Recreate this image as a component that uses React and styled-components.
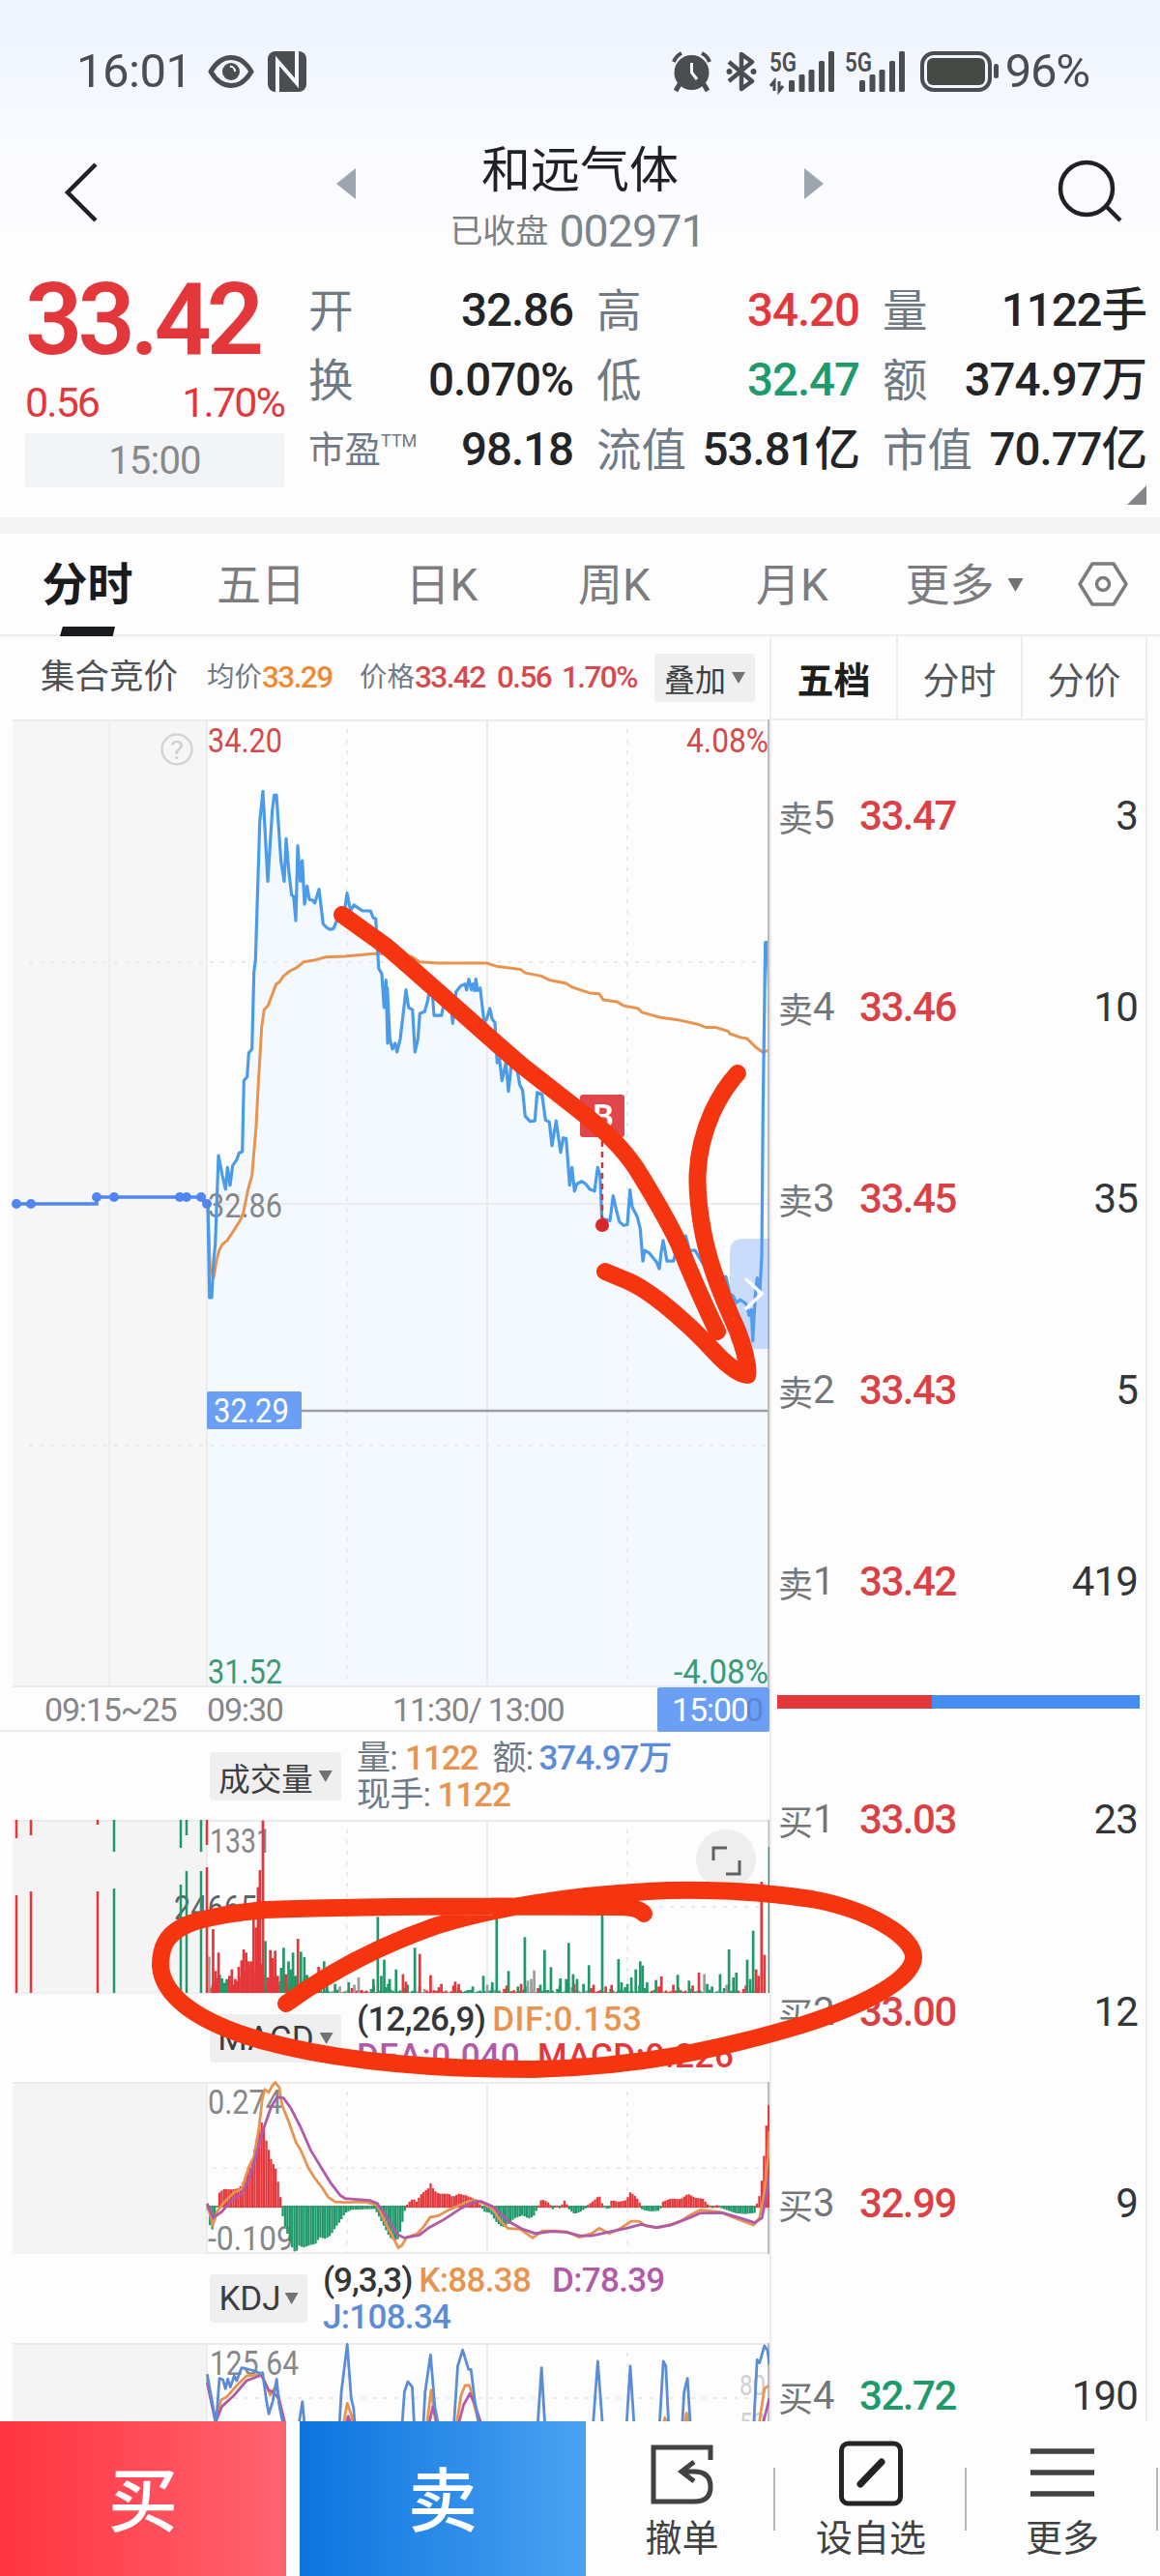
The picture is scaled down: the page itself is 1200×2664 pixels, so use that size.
import React from "react";
import styled, { createGlobalStyle, css } from "styled-components";

const FONT = `Roboto, "Noto Sans CJK SC", "Noto Sans", sans-serif`;
const RED = "#e2373b";
const GREEN = "#1f9a6b";
const INK = "#222426";
const SLATE = "#6f7a84";
const ORANGE = "#e8944f";
const PURPLE = "#b05aa8";
const BLUE = "#5b8cd8";
const LINE = "#ececee";
const UP = "#e5363a";
const DOWN = "#20996a";

const GlobalStyle = createGlobalStyle`
  body { margin: 0; background: #fdfdfe; font-family: ${FONT}; }
  * { box-sizing: border-box; }
`;

const Screen = styled.div`
  width: 1200px;
  height: 2664px;
  overflow: hidden;
  display: flex;
  flex-direction: column;
  background: linear-gradient(#edf5fe 0, #f1f6ff 60px, #fafbff 150px, #fdfdfe 260px);
  color: ${INK};
`;

const Text = styled.span`
  font-size: ${(p) => p.$size}px;
  font-weight: ${(p) => p.$weight || 400};
  color: ${(p) => p.$color || INK};
  letter-spacing: ${(p) => p.$track ?? 0}em;
  line-height: 1;
  white-space: nowrap;
`;

/* ---------- status bar ---------- */
const StatusBar = styled.div`
  height: 147px;
  flex: none;
  display: flex;
  align-items: center;
  justify-content: space-between;
  padding: 0 73px 0 79px;
`;
const StatusGroup = styled.div`
  display: flex;
  align-items: center;
`;
const Icon = styled.svg`
  display: block;
  flex: none;
  overflow: visible;
  margin-left: ${(p) => p.$gap || 0}px;
`;
const PercentText = styled(Text)`
  margin-left: 6px;
`;
const STATUS = "#4a4e50";

const Signal = ({ gap, data }) => (
  <Icon $gap={gap} width={data ? 67 : 62} height="42" viewBox={data ? "0 0 67 42" : "5 0 62 42"}>
    <text x={data ? 0 : 5} y="21" fontSize="27" fontWeight="600" fontFamily={FONT} fill={STATUS} textLength="28" lengthAdjust="spacingAndGlyphs">5G</text>
    {data && <path d="M5 41V31L1 36M10 31V41L14 36" stroke={STATUS} strokeWidth="3" fill="none" />}
    {[[22, 30], [32.5, 24], [42.5, 19], [53, 10], [63, 0]].map(([x, y]) => (
      <rect key={x} x={x - 2} y={y} width="6" height={42 - y} rx="1.5" fill={STATUS} />
    ))}
  </Icon>
);

const Status = () => (
  <StatusBar>
    <StatusGroup>
      <Text $size={49} $color={STATUS} $track={-0.01}>16:01</Text>
      <Icon $gap={16} width="48" height="34" viewBox="0 0 48 34">
        <path d="M3 17C10 5 17 2.5 24 2.5S38 5 45 17C38 29 31 31.5 24 31.5S10 29 3 17Z" fill="none" stroke={STATUS} strokeWidth="5" strokeLinejoin="round" />
        <circle cx="24" cy="17" r="9" fill={STATUS} />
        <path d="M23 11.500A5.500 5.500 0 0 1 28 17" fill="none" stroke="#fff" strokeWidth="2" />
      </Icon>
      <Icon $gap={14} width="40" height="42" viewBox="0 0 40 42">
        <rect width="40" height="42" rx="8" fill={STATUS} />
        <path d="M10 42V10L30 33V0" fill="none" stroke="#f3f7ff" strokeWidth="4" />
      </Icon>
    </StatusGroup>
    <StatusGroup>
      <Icon width="41" height="42" viewBox="0 0 41 42">
        <circle cx="20.500" cy="22" r="18" fill={STATUS} />
        <path d="M2 11Q4 5 10 2M39 11Q37 5 31 2" stroke={STATUS} strokeWidth="4" fill="none" />
        <path d="M8 34L4 41M33 34L37 41" stroke={STATUS} strokeWidth="5" />
        <path d="M20.500 12V22L26 29" stroke="#fff" strokeWidth="3" fill="none" />
      </Icon>
      <Icon $gap={15} width="32" height="42" viewBox="0 0 32 42">
        <path d="M3 11L27 31L16 39V3L27 11L3 31" stroke={STATUS} strokeWidth="4.500" fill="none" strokeLinejoin="round" />
        <circle cx="3.500" cy="21" r="3" fill={STATUS} />
        <circle cx="28.500" cy="21" r="3" fill={STATUS} />
      </Icon>
      <Signal gap={13} data />
      <Signal gap={11} />
      <Icon $gap={16} width="82" height="42" viewBox="0 0 82 42">
        <rect x="2" y="2" width="70" height="38" rx="12" fill="none" stroke={STATUS} strokeWidth="4" />
        <rect x="7" y="7" width="60" height="28" rx="6" fill="#454a46" />
        <rect x="76" y="13" width="5" height="15" rx="2.500" fill={STATUS} />
      </Icon>
      <PercentText $size={49} $color={STATUS} $track={-0.025}>96%</PercentText>
    </StatusGroup>
  </StatusBar>
);

/* ---------- title ---------- */
const TitleBar = styled.div`
  height: 123px;
  flex: none;
  display: grid;
  grid-template-columns: 348px 20px 1fr 20px 239px 109px;
  align-items: start;
`;
const TitleBlock = styled.div`
  display: flex;
  flex-direction: column;
  align-items: center;
`;
const TitleName = styled.div`
  font-size: 51px;
  line-height: 60px;
  color: #1f2124;
`;
const TitleSub = styled.div`
  display: flex;
  align-items: center;
  gap: 11px;
  height: 64px;
  padding-right: 5px;
`;
const Spot = styled.div`
  padding-top: ${(p) => p.$top}px;
  padding-left: ${(p) => p.$left || 0}px;
`;

const Title = () => (
  <TitleBar>
    <Spot $top={21} $left={66}>
      <Icon width="36" height="62" viewBox="0 0 36 62"><path d="M33 2L4 31L33 60" fill="none" stroke="#1f2124" strokeWidth="4.500" /></Icon>
    </Spot>
    <Spot $top={27}><Icon width="20" height="32" viewBox="0 0 20 32"><path d="M20 0V32L0 16Z" fill="#9ba6b1" /></Icon></Spot>
    <TitleBlock>
      <TitleName>和远气体</TitleName>
      <TitleSub>
        <Text $size={34} $color="#7b8084">已收盘</Text>
        <Text $size={46.5} $color="#7a868b" $track={-0.02}>002971</Text>
      </TitleSub>
    </TitleBlock>
    <Spot $top={27}><Icon width="20" height="32" viewBox="0 0 20 32"><path d="M0 0V32L20 16Z" fill="#9ba6b1" /></Icon></Spot>
    <span />
    <Spot $top={18} $left={3}>
      <Icon width="68" height="66" viewBox="0 0 68 66">
        <circle cx="30" cy="30" r="27" fill="none" stroke="#1f2124" strokeWidth="4.500" />
        <path d="M50 48L65 63" stroke="#1f2124" strokeWidth="4.500" />
      </Icon>
    </Spot>
  </TitleBar>
);

/* ---------- quote ---------- */
const Quote = styled.div`
  height: 265px;
  flex: none;
  display: grid;
  grid-template-columns: 268px 1fr;
  column-gap: 25px;
  padding: 10px 13px 0 26px;
`;
const QuotePrice = styled.div`
  font-size: 104px;
  font-weight: 600;
  line-height: 102px;
  height: 100px;
  letter-spacing: -0.048em;
  color: ${RED};
`;
const QuoteChange = styled.div`
  display: flex;
  justify-content: space-between;
  align-items: center;
  height: 68px;
  padding-top: 4px;
`;
const QuoteTime = styled.div`
  height: 56px;
  display: flex;
  align-items: center;
  justify-content: center;
  background: #f3f4f6;
  border-radius: 2px;
  padding-top: 2px;
`;
const Stats = styled.div`
  display: grid;
  grid-template-columns: 274px 272px 273px;
  grid-template-rows: repeat(3, 72px);
  column-gap: 24px;
  padding-top: 6px;
`;
const Stat = styled.div`
  display: flex;
  align-items: center;
  justify-content: space-between;
`;
const StatLabel = styled(Text)`
  display: flex;
`;
const Sup = styled.sup`
  font-size: 18px;
  line-height: 1;
  align-self: flex-start;
`;
const Corner = styled.div`
  grid-column: 3;
  justify-self: end;
  width: 20px;
  height: 20px;
  background: #85868a;
  clip-path: polygon(100% 0, 100% 100%, 0 100%);
`;
const STATS = [
  ["开", "32.86"], ["高", "34.20", RED], ["量", "1122手"],
  ["换", "0.070%"], ["低", "32.47", GREEN], ["额", "374.97万"],
  ["市盈", "98.18", INK, true], ["流值", "53.81亿"], ["市值", "70.77亿"],
];

const Band = styled.div`
  height: 17px;
  flex: none;
  background: #f4f4f5;
`;

/* ---------- period tabs ---------- */
const Tabs = styled.div`
  height: 106px;
  flex: none;
  display: grid;
  grid-template-columns: 181px 178px 196px 161px 207px 149px 128px;
  border-bottom: 2px solid ${LINE};
`;
const Tab = styled.div`
  display: flex;
  flex-direction: column;
  align-items: center;
  justify-content: space-between;
  height: 106px;
  padding-top: 29px;
  font-size: 46px;
  line-height: 48px;
  white-space: nowrap;
  color: #7c7c7e;
  ${(p) => p.$active && css`
    color: #1a1b1d;
    font-weight: 700;
    font-size: 47px;
    &::after {
      content: "";
      width: 57px;
      height: 10px;
      background: #1a1b1d;
      clip-path: polygon(5% 0, 100% 0, 96% 100%, 0 100%);
    }
  `}
`;
const Inline = styled.div`
  display: flex;
  align-items: center;
`;
const Caret = styled.i`
  flex: none;
  width: ${(p) => p.$w || 14}px;
  height: ${(p) => p.$h || 12}px;
  margin-left: ${(p) => p.$gap ?? 6}px;
  background: ${(p) => p.$color || "#707274"};
  clip-path: polygon(0 0, 100% 0, 50% 100%);
`;

/* ---------- body ---------- */
const Body = styled.div`
  position: relative;
  flex: 1;
  display: grid;
  grid-template-columns: 796px 391px;
  overflow: hidden;
`;
const ChartColumn = styled.div`
  display: flex;
  flex-direction: column;
`;
const InfoBar = styled.div`
  height: 86px;
  flex: none;
  display: grid;
  align-items: center;
  grid-template-columns: 172px 158px 142px 67px 96px 104px;
  padding-left: 42px;
`;
const Drop = styled.div`
  height: 50px;
  width: ${(p) => p.$w}px;
  flex: none;
  display: flex;
  align-items: center;
  justify-content: center;
  background: #efeff0;
  border-radius: 4px;
  font-size: ${(p) => p.$size || 32}px;
  color: #3c3e40;
  white-space: nowrap;
`;
const Axis = styled.div`
  height: 46px;
  flex: none;
  display: grid;
  grid-template-columns: 168px 192px 274px 116px;
  align-items: center;
  padding-left: 46px;
  border-bottom: 2px solid ${LINE};
  font-size: 34px;
  letter-spacing: -0.035em;
  color: #858688;
  white-space: nowrap;
`;
const AxisNow = styled.div`
  position: relative;
  height: 46px;
  line-height: 46px;
  padding-left: 15px;
  background: #6b9ff6;
  color: #fff;
  border-radius: 2px;
`;
const AxisGhost = styled.span`
  position: absolute;
  right: 7px;
  color: #5c86cf;
`;
const Indicator = styled.div`
  height: ${(p) => p.$h}px;
  flex: none;
  display: flex;
  padding-left: 217px;
`;
const IndicatorButton = styled(Drop)`
  margin-top: 21px;
`;
const Readout = styled.div`
  padding: ${(p) => p.$top || 8}px 0 0 16px;
  font-size: 35px;
  font-weight: 500;
`;
const ReadoutLine = styled.div`
  display: flex;
  height: 38px;
  line-height: 38px;
  white-space: nowrap;
`;
const Value = styled.span`
  color: ${(p) => p.$c};
  font-weight: ${(p) => p.$w || 500};
  margin-left: ${(p) => p.$gap || 0}px;
  letter-spacing: ${(p) => p.$track ?? -0.02}em;
`;
const Plot = styled.svg`
  display: block;
  flex: none;
  overflow: visible;
`;

/* Maps plotted samples to panel pixels. */
const trace = (points, sx, sy, ox = 0, oy = 0) =>
  points.map(([x, y], i) => `${i ? "L" : "M"}${(ox + x / sx).toFixed(1)} ${(oy + y / sy).toFixed(1)}`).join("");
const pairs = (s) => s.trim().split(/\s+/).map((p) => p.split(",").map(Number));

const PRICE_AM = pairs(`645,1235 650,1475 657,1475 663,1380 668,1340 678,1115 690,1165 700,1200 706,1145 714,1190 722,1140 735,1125 742,1108 752,1105 757,925 767,915 772,855 782,845 788,650 793,620 806,270 816,192 831,420 845,240 851,202 858,202 872,370 882,420 888,312 897,400 905,455 911,458 918,520 924,330 932,420 938,368 945,478 953,432 960,466 970,468 977,475 990,440 1003,528 1015,538 1025,542 1035,540 1045,520 1060,500 1070,490 1077,450 1088,495 1098,480 1125,495 1150,495 1158,512 1166,515 1175,640 1185,655 1192,740 1198,670 1203,830`);
const PRICE_PM = pairs(`2,690 10,820 18,845 26,830 32,852 42,820 60,695 68,740 80,745 88,852 97,820 103,755 118,750 128,720 138,660 147,760 170,760 180,720 200,740 205,780 215,700 230,685 243,680 248,695 255,668 263,695 268,680 273,697 277,668 282,697 290,690 303,780 312,765 320,742 328,770 336,778 343,880 350,870 358,925 370,880 378,952 390,860 405,900 413,935 422,950 430,1015 445,1028 460,1027 467,955 482,960 493,1025 505,1030 513,1090 526,1027 540,1107 548,1070 557,1072 568,1190 575,1145 583,1205 590,1187 605,1180 618,1187 630,1200 645,1205 655,1145 662,1165 668,1275 693,1280 703,1217 712,1250 722,1282 735,1292 747,1290 755,1202 762,1245 778,1270 787,1300 795,1382 801,1355 815,1362 825,1372 838,1385 846,1402 852,1360 858,1330 870,1382 890,1382 900,1350 928,1318 940,1355 957,1355 990,1400 1020,1372 1030,1400 1040,1422 1053,1422 1065,1465 1075,1470 1085,1488 1097,1480 1115,1490 1125,1520 1132,1505 1136,1585 1144,1470 1150,1425 1158,1460 1164,1370 1168,1000 1175,575 1182,575 1188,730`);
const AVG_AM = pairs(`645,1235 652,1400 663,1425 672,1380 680,1355 690,1340 705,1330 725,1305 745,1280 755,1260 770,1200 782,1165 795,1040 802,930 812,790 820,745 832,735 857,680 866,676 880,660 898,648 918,640 943,624 975,620 1010,612 1070,610 1170,603`);
const AVG_PM = pairs(`0,604 60,610 80,612 102,624 160,627 310,627 340,635 415,643 430,652 480,660 505,670 555,678 575,688 630,703 660,705 672,720 715,725 735,735 780,742 792,752 850,765 910,772 965,782 990,790 1020,790 1060,800 1065,806 1100,816 1118,818 1145,840 1168,853 1190,847`);
const join = (am, pm) => trace(am, 3, 2.45, 0, -4) + trace(pm, 3, 2.45, 400, -4).replace("M", "L");

const PlotText = ({ x, y, w, color, end, size = 35, children }) => (
  <text x={x} y={y} fontFamily={FONT} fontSize={size} fill={color} textLength={w} lengthAdjust="spacingAndGlyphs" textAnchor={end ? "end" : "start"}>{children}</text>
);

const Grid = ({ h, left, mid }) => (
  <g stroke="#e9ebed" strokeWidth="2" fill="none">
    <path d={`M13 1H797M214 0V${h}M504 0V${h}`} />
    <path d={`M359 10V${h}M649 10V${h}`} strokeDasharray="4 7" />
    {mid && <path d={`M220 ${mid}H790`} strokeDasharray="4 7" />}
    {left && <path d={`M113 0V${h}`} strokeWidth="1.500" />}
  </g>
);

const AUCTION = [[17, 501], [32, 501], [100, 494], [118, 494], [186, 494], [193, 494], [208, 494], [214, 501]];

const PricePlot = () => {
  const line = join(PRICE_AM, PRICE_PM);
  return (
    <Plot width="796" height="1001" viewBox="0 0 796 1001">
      <rect x="13" width="201" height="1001" fill="#f6f6f6" />
      <path d={`${line}L796 1001L215 1001Z`} fill="#f4f9ff" />
      <Grid h={1001} left />
      <g stroke="#e9ebed" strokeWidth="2">
        <path d="M30 251H795M30 751H795" strokeDasharray="4 7" />
        <path d="M214 501H797M13 1000H797" />
      </g>
      <circle cx="183" cy="31" r="15.500" fill="none" stroke="#d4d4d6" strokeWidth="2.500" />
      <PlotText x={176} y={41} size={26} w={14} color="#cfcfd1">?</PlotText>
      <PlotText x={215} y={34} w={77} color="#d5484b">34.20</PlotText>
      <PlotText x={795} y={34} w={85} color="#d5484b" end>4.08%</PlotText>
      <PlotText x={215} y={515} w={77} color="#858789">32.86</PlotText>
      <PlotText x={215} y={997} w={77} color="#389b74">31.52</PlotText>
      <PlotText x={795} y={997} w={98} color="#389b74" end>-4.08%</PlotText>
      <path d="M312 715H797" stroke="#9a9ea4" strokeWidth="2.500" />
      <rect x="214" y="695" width="98" height="39" rx="2" fill="#6b9ff6" />
      <PlotText x={221} y={727} w={78} color="#fff">32.29</PlotText>
      <path d={join(AVG_AM, AVG_PM)} fill="none" stroke={ORANGE} strokeWidth="3" strokeLinejoin="round" />
      <path d={line} fill="none" stroke="#4a9bea" strokeWidth="3.200" strokeLinejoin="round" />
      <path d="M13 501H100V494H208L214 501" fill="none" stroke="#4f86f0" strokeWidth="3.500" />
      {AUCTION.map(([x, y]) => <circle key={x} cx={x} cy={y} r="5" fill="#4f86f0" />)}
      <path d="M623 436V518" stroke="#c23b3f" strokeWidth="2.500" strokeDasharray="6 5" />
      <circle cx="623" cy="523" r="7" fill="#d8262b" />
      <rect x="600" y="388" width="46" height="44" rx="3" fill="#e0464b" />
      <text x="624" y="422" textAnchor="middle" fontFamily={FONT} fontWeight="600" fontSize="34" fill="#fff">B</text>
      <path d="M795.500 0V1001" stroke="#b9bcbf" strokeWidth="3" />
      <path d="M797 537H769Q755 537 755 551V637Q755 651 769 651H797Z" fill="#6b9ff6" opacity=".35" />
      <path d="M771 578L788 594L771 610" fill="none" stroke="#fff" strokeWidth="3.500" />
    </Plot>
  );
};

const VOL = `424,730,n 432,645,r 437,775,r 443,718,r 450,798,g 455,812,g 460,800,g 465,790,r 470,770,r 477,800,r 484,762,r 490,790,r 494,708,r 499,718,r 504,745,r 510,745,r 514,610,r 519,640,r 523,515,r 527,462,r 533,308,r 538,682,g 543,795,r 548,710,r 553,735,r 558,712,r 563,790,r 570,765,g 575,703,g 580,785,r 585,745,g 590,770,g 594,718,g 599,790,g 604,675,r 610,715,g 617,732,g 623,790,g 630,800,g 646,762,r 657,745,g 663,800,g 707,810,g 727,795,n 757,800,g 766,607,g 773,790,g 779,740,g 790,800,g 803,770,g 817,785,r 823,808,r 841,703,g 851,722,r 873,788,r 923,808,r 930,815,r 980,790,g 998,810,g 1007,600,g 1031,775,g 1050,823,g 1064,670,g 1070,805,n 1077,800,n 1083,773,n 1104,710,g 1117,763,g 1136,798,g 1148,800,g 1153,688,g 1162,785,g 1170,800,g 1183,815,g 1194,757,g 1221,595,g 1240,818,r 1254,738,g 1260,810,g 1280,795,g 1289,770,g 1298,745,g 1303,758,g 1312,810,g 1330,803,g 1341,792,r 1374,787,g 1397,805,g 1417,780,r 1428,785,n 1460,785,g 1478,708,g 1487,795,g 1493,780,g 1515,740,g 1521,800,g 1527,650,g 1533,770,r 1538,790,r 1544,498,r 1550,725,r 1560,390,g`
  .split(" ").map((s) => s.split(","));
const TINT = { r: UP, g: DOWN, n: "#98a09c" };
/* Quiet minutes between the traded spikes. */
const QUIET = Array.from({ length: 184 }, (_, i) => [
  640 + i * 4.9,
  845 - (4 + ((i * 37) % 11) * ((i * 13) % 7 > 3 ? 2.6 : 0.7)),
  "grgrngrg"[(i * 5 + (i >> 2)) % 8],
]);
const OPENING = Array.from({ length: 44 }, (_, i) => [
  426 + i * 4.9,
  845 - (18 + ((i * 29) % 9) * 5 + (i > 12 && i < 22 ? 45 : 0)),
  i < 4 || (i > 7 && i < 29 && i !== 23) ? "r" : "g",
]);
const AUCTION_VOL = [[17, 19, 78, "r"], [32, 16, 74, "r"], [101, 5, 74, "r"], [118, 33, 71, "g"], [187, 29, 67, "g"], [193, 16, 53, "g"], [208, 33, 53, "g"], [214, 26, 49, "r"]];

const VolumePlot = () => (
  <Plot width="796" height="180" viewBox="0 0 796 180">
    <rect x="13" width="201" height="180" fill="#f4f4f4" />
    <Grid h={180} mid={90} />
    <PlotText x={217} y={34} w={64} color="#858789">1331</PlotText>
    <PlotText x={180} y={103} w={86} color="#606264">24665</PlotText>
    {AUCTION_VOL.map(([x, a, b, c]) => (
      <path key={x} d={`M${x} 0V${a}M${x} ${b}V180`} stroke={TINT[c]} strokeWidth="2.500" />
    ))}
    {[...OPENING, ...QUIET, ...VOL].map(([x, y, c], i) => (
      <rect key={i} x={x / 1.96 - 1.3} y={(y - 306) / 3} width="2.700" height={(845 - y) / 3} fill={TINT[c]} />
    ))}
    <path d="M13 179.500H797" stroke={LINE} />
    <path d="M796 0V28" stroke="#b9bcbf" strokeWidth="3" />
    <circle cx="751" cy="41" r="31" fill="#ececed" opacity=".9" />
    <path d="M738 42V29H752M765 42V56H751" fill="none" stroke="#5e6062" strokeWidth="3" />
  </Plot>
);

const HIST = pairs(`420,485 425,540 432,560 438,500 441,480 445,440 455,430 470,432 485,428 495,405 510,350 520,280 527,240 533,212 540,280 550,340 560,370 566,430 571,480 574,525 583,570 590,605 600,632 605,605 615,612 628,605 640,600 648,580 660,585 670,575 680,550 690,530 700,505 712,495 760,492 770,520 780,550 790,580 800,590 808,585 815,540 822,490 825,480 830,470 838,460 845,470 852,450 862,435 868,430 873,412 880,435 890,445 910,445 918,455 930,445 945,450 960,460 975,480 980,500 995,505 1005,530 1015,545 1025,550 1032,535 1045,520 1060,512 1072,522 1082,515 1090,490 1093,478 1098,462 1110,470 1116,480 1120,495 1127,478 1135,490 1145,465 1150,480 1153,492 1165,508 1175,502 1188,490 1192,480 1205,465 1215,450 1222,480 1228,492 1236,490 1240,465 1255,470 1270,465 1278,440 1290,455 1298,475 1302,495 1320,500 1335,498 1340,490 1343,470 1360,460 1380,462 1395,445 1410,458 1425,460 1435,478 1445,490 1452,478 1460,488 1490,505 1510,508 1530,505 1534,480 1542,440 1548,350 1553,250 1557,175 1562,160`);
const levelAt = (x) => {
  const i = Math.max(1, HIST.findIndex((p) => p[0] >= x));
  const [a, b] = [HIST[i - 1], HIST[i]];
  return a[1] + ((b[1] - a[1]) * (x - a[0])) / (b[0] - a[0]);
};
const MACD_BARS = Array.from({ length: 240 }, (_, i) => 421 + i * 4.76);
const DIF = pairs(`420,480 432,540 440,500 455,470 475,440 490,430 505,360 515,330 525,240 532,150 537,122 545,130 552,110 558,100 566,115 572,170 585,220 600,285 610,310 625,365 640,400 655,430 665,455 680,470 700,472 740,470 765,480 780,530 800,590 808,612 815,605 825,580 845,570 860,545 872,518 890,512 910,495 935,478 950,468 965,465 980,475 1000,495 1015,530 1030,552 1055,555 1080,582 1100,560 1130,560 1150,563 1175,580 1200,568 1215,552 1235,568 1255,555 1280,530 1295,530 1310,545 1335,550 1360,540 1380,530 1400,510 1420,495 1460,502 1490,520 1528,542 1540,520 1550,440 1557,330 1560,250`);
const DEA = pairs(`420,475 432,520 450,500 470,465 490,445 505,400 520,320 535,240 550,175 562,145 575,148 590,180 610,240 630,310 650,360 670,410 690,450 700,460 750,466 765,475 785,520 805,570 820,582 850,573 870,550 900,525 935,490 960,470 975,468 1000,485 1030,530 1060,555 1085,568 1120,562 1150,565 1175,575 1200,575 1240,562 1270,552 1300,540 1330,550 1360,542 1400,518 1420,505 1465,504 1500,520 1530,535 1545,520 1555,440 1562,380`);

const MacdPlot = () => (
  <Plot width="796" height="178" viewBox="0 0 796 178">
    <rect x="13" width="201" height="178" fill="#f4f4f4" />
    <Grid h={178} mid={89} />
    <path d="M214 177H797" stroke={LINE} strokeWidth="2" />
    <path d="M795.500 0V178" stroke="#b9bcbf" strokeWidth="3" />
    <PlotText x={215} y={33} w={77} color="#858789">0.274</PlotText>
    <PlotText x={215} y={174} w={89} color="#858789">-0.109</PlotText>
    <path d="M214 129.500H797" stroke="#f0a5a5" strokeWidth="1.500" />
    {MACD_BARS.map((x) => {
      const y = (levelAt(x) - 98) / 3;
      const zero = 129;
      return <rect key={x} x={x / 1.96 - 1.15} y={Math.min(y, zero - 1)} width="2.300" height={Math.abs(zero - y) + 1} fill={y < zero ? UP : DOWN} />;
    })}
    <path d={trace(DIF, 1.96, 3, 0, -32.6)} fill="none" stroke={ORANGE} strokeWidth="2.800" />
    <path d={trace(DEA, 1.96, 3, 0, -32.6)} fill="none" stroke={PURPLE} strokeWidth="2.800" />
  </Plot>
);

const J = pairs(`420,1005 430,1090 438,1160 445,1018 452,1022 457,1050 462,1020 467,1045 475,1010 480,1025 490,985 510,992 533,1005 540,1085 545,1128 553,1090 561,1020 566,1100 575,1170 605,1170 613,1090 618,1170 688,1170 692,1060 704,912 712,1080 717,1110 720,1170 815,1170 820,1060 827,1028 836,1045 840,1170 858,1170 862,1060 873,945 882,1110 890,1170 920,1170 928,980 938,930 950,990 955,990 963,1090 972,1170 1090,1170 1098,985 1105,1170 1202,1170 1212,965 1222,1170 1270,1170 1278,980 1286,1170 1337,1170 1345,965 1350,980 1356,1170 1383,1170 1387,1060 1394,1018 1400,1170 1528,1170 1535,960 1540,970 1550,917 1556,930 1560,975`);
const K = pairs(`420,1020 437,1150 448,1085 460,1075 480,1040 500,1010 530,1005 540,1040 548,1070 560,1040 570,1110 578,1170 695,1170 704,1095 712,1130 718,1170 865,1170 874,1055 885,1170 925,1170 935,1070 943,1040 952,1040 965,1120 973,1170 1343,1170 1348,1140 1354,1170 1387,1170 1392,1125 1397,1170 1538,1170 1550,1050 1558,1040`);
const D = pairs(`420,1030 437,1155 450,1105 475,1070 500,1025 530,1008 545,1055 553,1060 565,1080 580,1170 700,1170 706,1135 714,1170 868,1170 878,1105 888,1170 928,1170 940,1100 953,1065 963,1100 978,1170 1545,1170 1560,1080`);

const KdjPlot = () => (
  <Plot width="796" height="81" viewBox="0 0 796 81">
    <rect x="13" width="201" height="81" fill="#f4f4f4" />
    <Grid h={81} mid={57} />
    <path d="M795.500 0V81" stroke="#b9bcbf" strokeWidth="3" />
    <PlotText x={217} y={33} w={92} color="#858789">125.64</PlotText>
    <PlotText x={765} y={54} w={27} size={30} color="#cfd0d2">80</PlotText>
    <PlotText x={765} y={93} w={27} size={30} color="#cfd0d2">50</PlotText>
    <g transform="translate(0 -302.700)" fill="none" strokeWidth="2.800" strokeLinejoin="round">
      <path d={trace(K, 1.96, 3)} stroke={ORANGE} />
      <path d={trace(D, 1.96, 3)} stroke={PURPLE} />
      <path d={trace(J, 1.96, 3)} stroke={BLUE} />
    </g>
  </Plot>
);

/* ---------- order book ---------- */
const Book = styled.div`
  display: flex;
  flex-direction: column;
  border-left: 2px solid ${LINE};
  border-right: 2px solid ${LINE};
`;
const BookTabs = styled.div`
  height: 87px;
  flex: none;
  display: grid;
  grid-template-columns: repeat(3, 1fr);
  border-bottom: 2px solid ${LINE};
`;
const BookTab = styled.div`
  display: flex;
  align-items: center;
  justify-content: center;
  font-size: 38px;
  font-weight: ${(p) => (p.$active ? 700 : 400)};
  color: ${(p) => (p.$active ? "#1d1e20" : "#55585a")};
  & + & { border-left: 2px solid ${LINE}; }
`;
const Order = styled.div`
  height: ${(p) => p.$h}px;
  flex: none;
  display: grid;
  grid-template-columns: 84px 1fr auto;
  align-items: center;
  padding: 0 8px 0 7px;
  white-space: nowrap;
`;
const OrderLabel = styled.div`
  display: flex;
  align-items: center;
  font-size: 36px;
  color: #747678;
`;
const Ratio = styled.div`
  height: 14px;
  flex: none;
  display: flex;
  margin: 18px 6px 16px 6px;
`;
const RatioPart = styled.div`
  flex: ${(p) => p.$n};
  background: ${(p) => p.$c};
`;
const ASKS = [["5", "33.47", "3"], ["4", "33.46", "10"], ["3", "33.45", "35"], ["2", "33.43", "5"], ["1", "33.42", "419"]];
const BIDS = [["1", "33.03", "23"], ["2", "33.00", "12"], ["3", "32.99", "9"], ["4", "32.72", "190", GREEN]];

const OrderRow = ({ side, h, row: [n, price, qty, color] }) => (
  <Order $h={h}>
    <OrderLabel>{side}<Text $size={40} $color="#747678" $track={-0.03}>{n}</Text></OrderLabel>
    <Text $size={42} $weight={500} $color={color || "#dc4044"} $track={-0.035}>{price}</Text>
    <Text $size={42} $color="#333537" $track={-0.02}>{qty}</Text>
  </Order>
);

/* ---------- markup drawn over the charts ---------- */
const Markup = styled.svg`
  position: absolute;
  left: 0;
  top: 0;
  pointer-events: none;
`;

/* ---------- action bar ---------- */
const Actions = styled.div`
  height: 160px;
  flex: none;
  display: grid;
  grid-template-columns: 296px 296px 1fr;
  column-gap: 14px;
  background: #fdfdfe;
`;
const Trade = styled.div`
  display: flex;
  align-items: center;
  justify-content: center;
  padding-bottom: 8px;
  color: #fff;
  font-size: 72px;
  font-weight: 500;
  background: linear-gradient(90deg, ${(p) => p.$from}, ${(p) => p.$to});
`;
const Tools = styled.div`
  display: grid;
  grid-template-columns: 182px 198px 198px;
`;
const Tool = styled.div`
  position: relative;
  display: flex;
  flex-direction: column;
  align-items: center;
  gap: 8px;
  padding: 20px ${(p) => p.$pull || 0}px 0 0;
  font-size: 38px;
  line-height: 50px;
  color: #3f4143;
  white-space: nowrap;
  &::after {
    content: "";
    position: absolute;
    right: 0;
    top: 48px;
    width: 2px;
    height: 65px;
    background: #b5b7b9;
  }
`;

export default function App() {
  return (
    <Screen>
      <GlobalStyle />
      <Status />
      <Title />
      <Quote>
        <div>
          <QuotePrice>33.42</QuotePrice>
          <QuoteChange>
            <Text $size={43} $color={RED} $track={-0.045}>0.56</Text>
            <Text $size={43} $color={RED} $track={-0.045}>1.70%</Text>
          </QuoteChange>
          <QuoteTime><Text $size={40} $color="#88898c" $track={-0.02}>15:00</Text></QuoteTime>
        </div>
        <Stats>
          {STATS.map(([label, value, color, ttm]) => (
            <Stat key={label}>
              <StatLabel $size={ttm ? 37.5 : 46.5} $color={SLATE}>{label}{ttm && <Sup>TTM</Sup>}</StatLabel>
              <Text $size={47.5} $weight={500} $color={color} $track={-0.022}>{value}</Text>
            </Stat>
          ))}
          <Corner />
        </Stats>
      </Quote>
      <Band />
      <Tabs>
        <Tab $active>分时</Tab>
        <Tab>五日</Tab>
        <Tab>日K</Tab>
        <Tab>周K</Tab>
        <Tab>月K</Tab>
        <Tab><Inline>更多<Caret $w={16} $h={14} $gap={14} /></Inline></Tab>
        <Tab>
          <Inline>
            <Icon $gap={10} width="52" height="46" viewBox="0 0 52 46">
              <path d="M15 2H37L50 23L37 44H15L2 23Z" fill="none" stroke="#7c7c7e" strokeWidth="3.500" strokeLinejoin="round" />
              <circle cx="26" cy="23" r="6.500" fill="none" stroke="#7c7c7e" strokeWidth="3.500" />
            </Icon>
          </Inline>
        </Tab>
      </Tabs>
      <Body>
        <ChartColumn>
          <InfoBar>
            <Text $size={35.5} $color="#4f5153">集合竞价</Text>
            <Inline><Text $size={28.5} $color={SLATE}>均价</Text><Text $size={31.5} $weight={500} $color="#f08a32" $track={-0.05}>33.29</Text></Inline>
            <Inline><Text $size={28.5} $color={SLATE}>价格</Text><Text $size={31.5} $weight={500} $color="#d9484b" $track={-0.05}>33.42</Text></Inline>
            <Text $size={31.5} $weight={500} $color="#d9484b" $track={-0.05}>0.56</Text>
            <Text $size={31.5} $weight={500} $color="#d9484b" $track={-0.05}>1.70%</Text>
            <Drop $w={104}>叠加<Caret /></Drop>
          </InfoBar>
          <PricePlot />
          <Axis>
            <span>09:15~25</span>
            <span>09:30</span>
            <span>11:30/ 13:00</span>
            <AxisNow><AxisGhost>0</AxisGhost>15:00</AxisNow>
          </Axis>
          <Indicator $h={91}>
            <IndicatorButton $w={136} $size={32.5}>成交量<Caret /></IndicatorButton>
            <Readout $top={9}>
              <ReadoutLine>
                <Value $c={SLATE} $w={400}>量:</Value><Value $c={ORANGE} $gap={8} $track={-0.03}>1122</Value>
                <Value $c={SLATE} $w={400} $gap={15}>额:</Value><Value $c={BLUE} $gap={6} $track={-0.03}>374.97万</Value>
              </ReadoutLine>
              <ReadoutLine><Value $c={SLATE} $w={400}>现手:</Value><Value $c={ORANGE} $gap={7} $track={-0.03}>1122</Value></ReadoutLine>
            </Readout>
          </Indicator>
          <VolumePlot />
          <Indicator $h={91}>
            <IndicatorButton $w={136} $size={35}>MACD<Caret /></IndicatorButton>
            <Readout>
              <ReadoutLine><Value $c="#333537">(12,26,9)</Value><Value $c={ORANGE} $gap={7} $track={0.015}>DIF:0.153</Value></ReadoutLine>
              <ReadoutLine><Value $c={PURPLE} $track={0.015}>DEA:0.040</Value><Value $c={UP} $gap={18} $track={0.015}>MACD:0.226</Value></ReadoutLine>
            </Readout>
          </Indicator>
          <MacdPlot />
          <Indicator $h={92}>
            <IndicatorButton $w={101} $size={35}>KDJ<Caret $gap={4} /></IndicatorButton>
            <Readout $top={9}>
              <ReadoutLine><Value $c="#333537" $track={-0.03}>(9,3,3)</Value><Value $c={ORANGE} $gap={7}>K:88.38</Value><Value $c={PURPLE} $gap={22}>D:78.39</Value></ReadoutLine>
              <ReadoutLine><Value $c={BLUE}>J:108.34</Value></ReadoutLine>
            </Readout>
          </Indicator>
          <KdjPlot />
        </ChartColumn>
        <Book>
          <BookTabs>
            <BookTab $active>五档</BookTab>
            <BookTab>分时</BookTab>
            <BookTab>分价</BookTab>
          </BookTabs>
          {ASKS.map((row) => <OrderRow key={row[0]} side="卖" h={198} row={row} />)}
          <Ratio><RatioPart $n={160} $c={UP} /><RatioPart $n={216} $c="#478bf5" /></Ratio>
          {BIDS.map((row) => <OrderRow key={row[0]} side="买" h={198.6} row={row} />)}
        </Book>
        <Markup width="1200" height="1846" viewBox="0 658 1200 1846">
          <g fill="none" stroke="#f5350f" strokeWidth="18" strokeLinecap="round" strokeLinejoin="round">
            <path d="M354 946L400 979C450 1022 500 1068 540 1102L600 1149C622 1166 642 1184 658 1208C676 1237 690 1260 702 1286C714 1316 728 1348 742 1377" />
            <path d="M763 1110C750 1124 743 1137 737 1150C717 1195 719 1232 728 1278C735 1312 747 1340 758 1365Q769 1388 773 1412Q774 1422 773 1422C768 1422 758 1416 747 1406C737 1396 725 1382 709 1368C685 1346 668 1333 650 1325L626 1315" />
            <path d="M666 1979Q660 1972 640 1972Q400 1970 275 1975C190 1983 166 1995 166 2033C168 2062 200 2090 270 2110C350 2132 450 2140 551 2140C663 2138 750 2118 830 2094C900 2072 945 2045 945 2024C945 2003 900 1975 840 1964C780 1955 714 1953 670 1956C590 1960 510 1973 450 1992C390 2013 340 2040 296 2072" />
          </g>
        </Markup>
      </Body>
      <Actions>
        <Trade $from="#ff3440" $to="#ff6470">买</Trade>
        <Trade $from="#0b74df" $to="#4ba2f1">卖</Trade>
        <Tools>
          <Tool $pull={11}>
            <Icon width="66" height="68" viewBox="0 0 66 68">
              <path d="M62 20V7H3V63H45Q62 63 62 48Q62 32 45 32H32M45 22L32 32L45 42" fill="none" stroke="#404244" strokeWidth="5" />
            </Icon>
            撤单
          </Tool>
          <Tool>
            <Icon width="66" height="68" viewBox="0 0 66 68">
              <rect x="2.500" y="3" width="61" height="62" rx="7" fill="none" stroke="#222426" strokeWidth="5" />
              <path d="M22 45L44 22" stroke="#222426" strokeWidth="7" strokeLinecap="round" />
            </Icon>
            设自选
          </Tool>
          <Tool>
            <Icon width="66" height="68" viewBox="0 0 66 68">
              <path d="M0 11H66M0 33H66M0 55H66" stroke="#404244" strokeWidth="5.500" />
            </Icon>
            更多
          </Tool>
        </Tools>
      </Actions>
    </Screen>
  );
}
